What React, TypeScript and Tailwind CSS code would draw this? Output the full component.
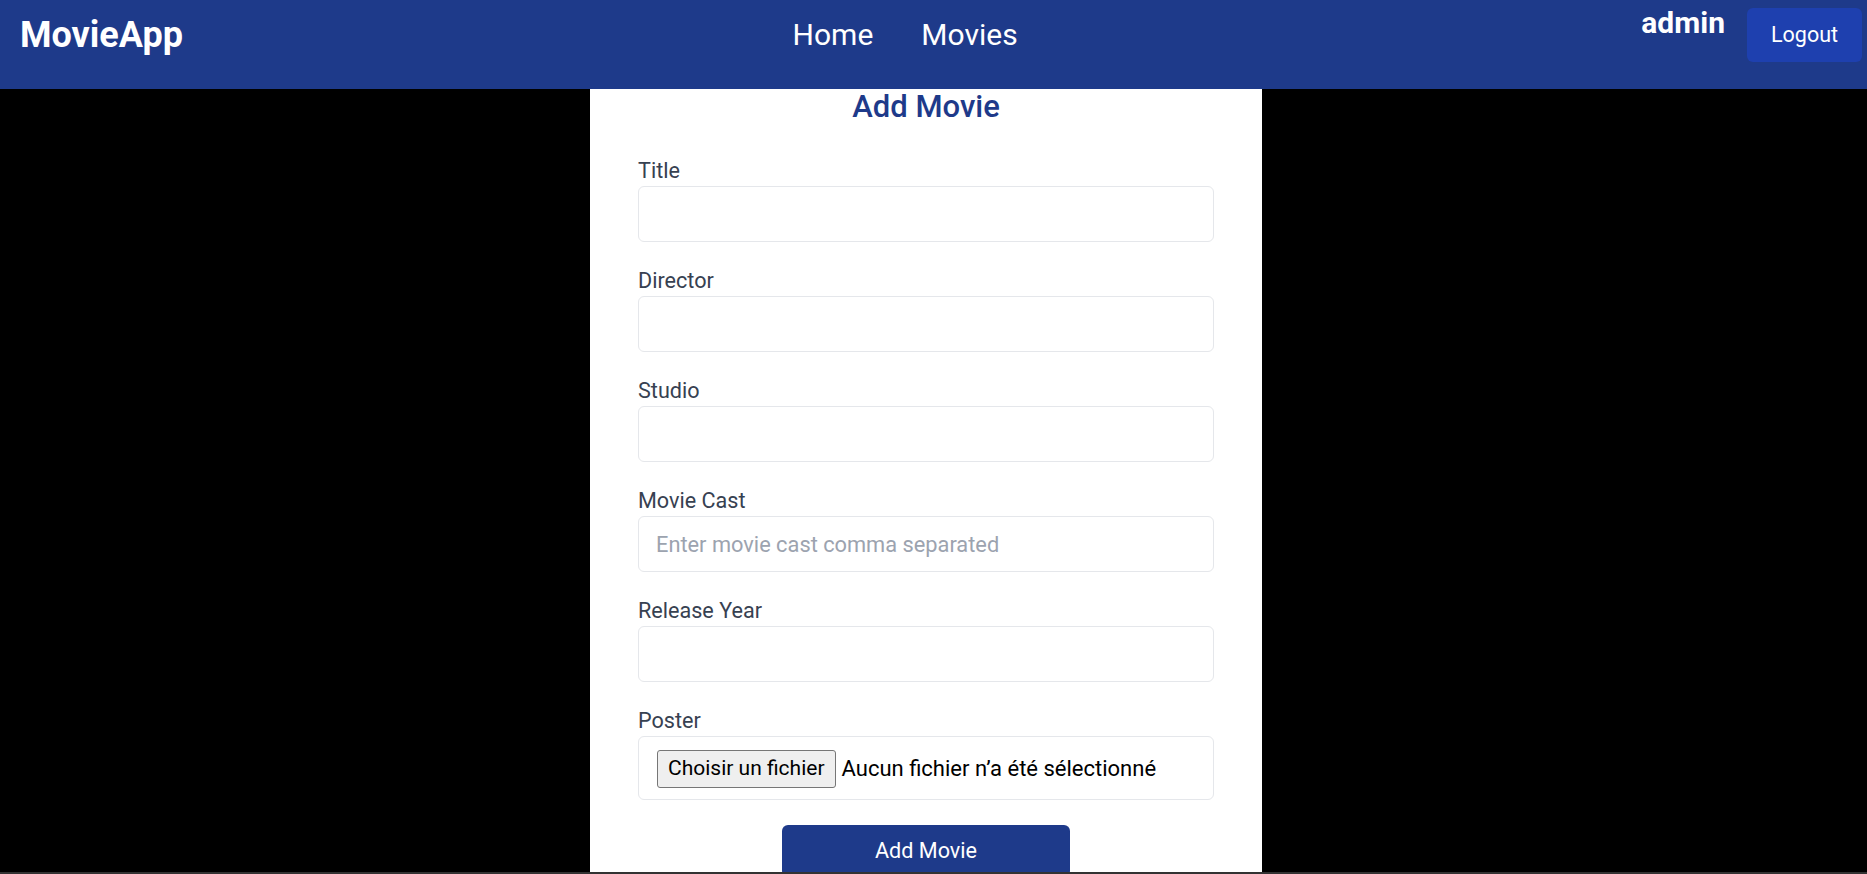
import React from 'react';

const fields = [
  { label: 'Title', placeholder: '' },
  { label: 'Director', placeholder: '' },
  { label: 'Studio', placeholder: '' },
  { label: 'Movie Cast', placeholder: 'Enter movie cast comma separated' },
  { label: 'Release Year', placeholder: '' },
];

const Header: React.FC = () => {
  return (
    <header className="h-[89px] bg-[#1e3a8a] flex justify-between items-start pl-[20px] pr-[5px]">
      <div className="pt-[15px] text-[36px] leading-10 font-bold text-white">MovieApp</div>
      <nav className="pt-[17px] mr-[14px] flex gap-12 text-[30px] leading-9 text-white">
        <a href="#">Home</a>
        <a href="#">Movies</a>
      </nav>
      <div className="pt-[5px] flex items-start gap-[22px]">
        <span className="text-[30px] leading-9 font-bold text-white">admin</span>
        <button className="mt-[3px] h-[54px] w-[115px] rounded-md bg-[#1e40af] text-[21.5px] text-white">
          Logout
        </button>
      </div>
    </header>
  );
};

const AddMovieForm: React.FC = () => {
  return (
    <div className="w-[672px] mx-auto bg-white px-12 pb-10">
      <h1 className="text-[31px] leading-9 font-medium text-[#1e3a8a] text-center mb-[34px]">
        Add Movie
      </h1>

      {fields.map(field => (
        <div key={field.label} className="mb-[27px]">
          <label className="block text-[21.6px] leading-6 text-[#374151] mb-[3px]">{field.label}</label>
          <input
            type="text"
            placeholder={field.placeholder}
            className="w-full h-[56px] border border-[#e5e7eb] rounded-md pl-[17px] pr-4 text-[21.8px] text-gray-900 placeholder:text-[#9ca3af] outline-none"
          />
        </div>
      ))}

      <div className="mb-[25px]">
        <label className="block text-[21.6px] leading-6 text-[#374151] mb-[3px]">Poster</label>
        <div className="w-full h-[64px] border border-[#e5e7eb] rounded-md pl-[18px] pt-[1px] flex items-center">
          <span className="h-[38px] px-[10px] flex items-center border border-[#767676] rounded-[3px] bg-[#efefef] text-[21px] text-black">
            Choisir un fichier
          </span>
          <span className="ml-[6px] text-[22px] text-black">Aucun fichier n’a été sélectionné</span>
        </div>
      </div>

      <button className="block w-1/2 mx-auto h-[52px] rounded-md bg-[#1e3a8a] text-[21.6px] text-white">
        Add Movie
      </button>
    </div>
  );
};

const App: React.FC = () => {
  return (
    <div className="h-[874px] overflow-hidden bg-black font-[Roboto,sans-serif] relative">
      <Header />
      <div className="pr-[15px]">
        <AddMovieForm />
      </div>
      <div className="absolute bottom-0 left-0 right-0 h-[2px] bg-[#333333]" />
    </div>
  );
};

export default App;
